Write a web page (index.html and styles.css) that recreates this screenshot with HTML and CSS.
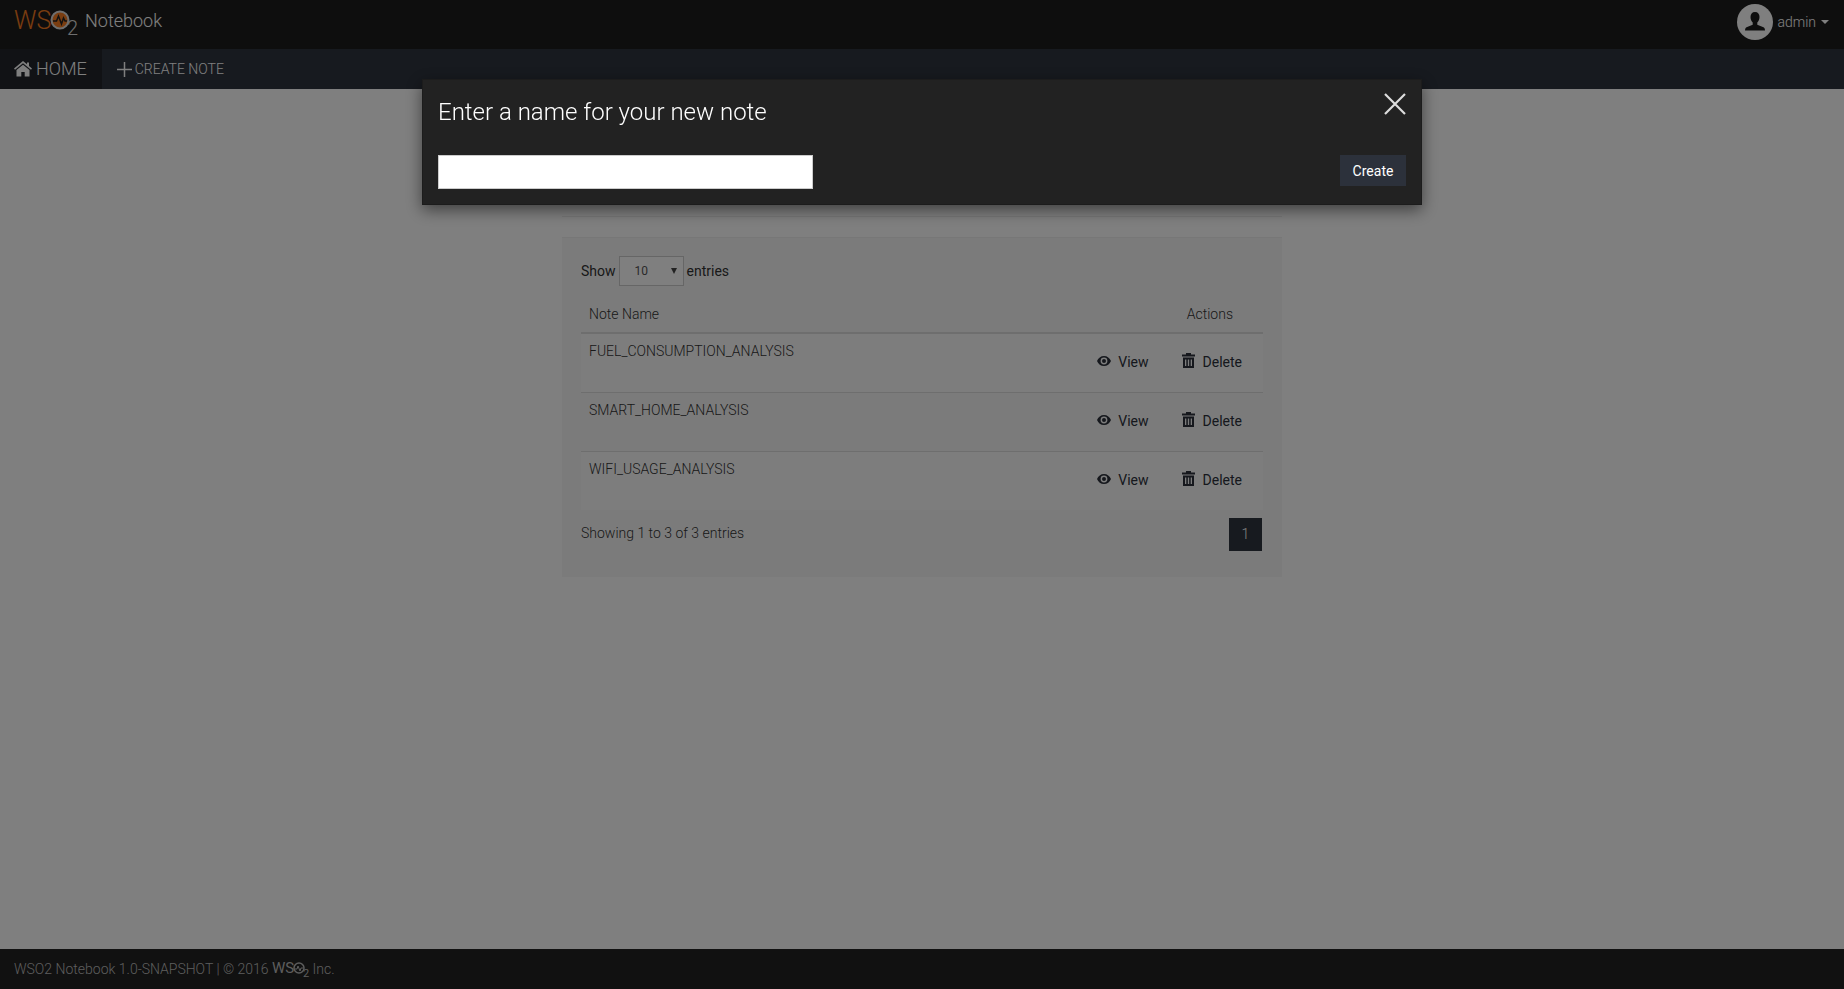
FILE: index.html
```html
<!DOCTYPE html>
<html lang="en">
<head>
<meta charset="utf-8">
<title>WSO2 Notebook</title>
<link rel="stylesheet" href="styles.css">
</head>
<body>
<svg class="sprite" aria-hidden="true">
  <symbol id="eye" viewBox="0 0 14 12"><path fill-rule="evenodd" d="M7 0C3.800 0 1.200 2 0 5c1.200 3 3.800 5 7 5s5.800-2 7-5C12.800 2 10.200 0 7 0zM7 1.600a3.400 3.400 0 1 1 0 6.800 3.400 3.400 0 0 1 0-6.800zM7 3a2 2 0 1 0 0 4 2 2 0 0 0 0-4z"/></symbol>
  <symbol id="trash" viewBox="0 0 14 18"><path fill-rule="evenodd" d="M4 0h5v1.500h4v2H0v-2h4zM1 4.500h11V15H1zM3 6.500V13h1.300V6.500zM5.850 6.500V13h1.300V6.500zM8.700 6.500V13H10V6.500z"/></symbol>
</svg>

<header class="header">
  <a class="brand" href="#">
    <svg class="brand-logo" viewBox="0 -4 66 36" role="img" aria-label="WSO2">
      <text class="logo-ws" x="0" y="20">WS</text>
      <circle cx="46" cy="11" r="8.500" fill="#f47b20" stroke="#ddd" stroke-width="2"/>
      <path d="M39 12h3.500l2-5 3 8 2-6 1.500 3h2" fill="none" stroke="#222" stroke-width="1.500"/>
      <text class="logo-two" x="53" y="26">2</text>
    </svg>
    <span class="brand-name">Notebook</span>
  </a>
  <button class="user" type="button">
    <svg class="avatar" viewBox="0 0 36 36" aria-hidden="true">
      <circle cx="18" cy="18" r="18" fill="#fff"/>
      <path d="M18 8c-3 0-4.500 2-4.500 5 0 2.500 1 4.500 2.200 5.600v2.200L9.500 23.200C8.500 23.800 8 25 8 26.500h20c0-1.500-.5-2.700-1.500-3.300l-6.200-2.400v-2.200c1.200-1.100 2.200-3.100 2.200-5.600 0-3-1.500-5-4.500-5z" fill="#1d1d1d"/>
    </svg>
    <span>admin</span>
    <span class="caret"></span>
  </button>
</header>

<nav class="nav">
  <a class="nav-home" href="#">
    <svg class="home-icon" viewBox="0 0 18 16" aria-hidden="true"><path d="M9 0L0 7.500l1 1.200 8-6.500 8 6.500 1-1.200-3-2.500V1.500h-2v1.800zM9 3.800L2.500 9v6.500h4.800v-4.500h3.400v4.500h4.800V9z"/></svg>
    <span>HOME</span>
  </a>
  <a class="nav-create" href="#">
    <svg class="plus-icon" viewBox="0 0 15 15" aria-hidden="true"><path d="M7.500 0v15M0 7.500h15" fill="none" stroke="currentColor" stroke-width="1.500"/></svg>
    <span>CREATE NOTE</span>
  </a>
</nav>

<main class="main">
  <section class="panel">
    <div class="length">
      <label for="length">Show</label>
      <span class="select-box"><select id="length"><option>10</option><option>25</option></select></span>
      <span>entries</span>
    </div>
    <table class="notes">
      <thead><tr><th>Note Name</th><th class="actions-head">Actions</th></tr></thead>
      <tbody>
        <tr><td>FUEL_CONSUMPTION_ANALYSIS</td><td><div class="actions"><a href="#"><svg class="eye" aria-hidden="true"><use href="#eye"/></svg>View</a><a href="#"><svg class="trash" aria-hidden="true"><use href="#trash"/></svg>Delete</a></div></td></tr>
        <tr><td>SMART_HOME_ANALYSIS</td><td><div class="actions"><a href="#"><svg class="eye" aria-hidden="true"><use href="#eye"/></svg>View</a><a href="#"><svg class="trash" aria-hidden="true"><use href="#trash"/></svg>Delete</a></div></td></tr>
        <tr><td>WIFI_USAGE_ANALYSIS</td><td><div class="actions"><a href="#"><svg class="eye" aria-hidden="true"><use href="#eye"/></svg>View</a><a href="#"><svg class="trash" aria-hidden="true"><use href="#trash"/></svg>Delete</a></div></td></tr>
      </tbody>
    </table>
    <div class="table-foot">
      <span>Showing 1 to 3 of 3 entries</span>
      <a class="page" href="#">1</a>
    </div>
  </section>
</main>

<footer class="footer">
  <span>WSO2 Notebook 1.0-SNAPSHOT | © 2016</span>
  <svg class="foot-logo" viewBox="0 -2 38 22" role="img" aria-label="WSO2">
    <text class="foot-ws" x="0" y="13">WS</text>
    <circle cx="27" cy="8" r="5" fill="none" stroke="#bbb" stroke-width="1.500"/>
    <path d="M23 9h2l1-3 2 5 1-3h2" fill="none" stroke="#bbb"/>
    <text class="foot-two" x="31" y="17">2</text>
  </svg>
  <span>Inc.</span>
</footer>

<div class="backdrop">
  <div class="modal" role="dialog" aria-modal="true" aria-labelledby="modal-title">
    <div class="modal-head">
      <h1 class="modal-title" id="modal-title"><label for="note-name">Enter a name for your new note</label></h1>
      <button class="close" type="button" aria-label="Close">
        <svg viewBox="0 0 22 22" aria-hidden="true"><path d="M1 1l20 20M21 1L1 21" fill="none" stroke="currentColor" stroke-width="2.200"/></svg>
      </button>
    </div>
    <form class="modal-body">
      <input class="note-name" id="note-name" type="text">
      <button class="create" type="button">Create</button>
    </form>
  </div>
</div>
</body>
</html>
```
FILE: styles.css
```css
* { box-sizing: border-box; }

body {
  margin: 0;
  min-height: 100vh;
  display: flex;
  flex-direction: column;
  background: #fff;
  color: #333;
  font: 300 14px/20px Roboto, sans-serif;
}

a { color: inherit; text-decoration: none; }
button { border: 0; padding: 0; background: none; font: inherit; cursor: pointer; }
svg { display: block; fill: currentColor; }
.sprite { position: absolute; width: 0; height: 0; }

.header {
  display: flex;
  justify-content: space-between;
  align-items: flex-start;
  height: 49px;
  padding: 4px 15px 0 14px;
  background: #1d1d1d;
  color: #fff;
}
.brand { display: flex; gap: 5px; padding-top: 1px; }
.brand-logo { width: 66px; height: 36px; }
.brand-name { padding-top: 4px; font-size: 18px; line-height: 24px; }
.logo-ws { font: 300 25px Roboto, sans-serif; fill: #f47b20; }
.logo-two { font: 300 20px Roboto, sans-serif; fill: #ddd; }
.user { display: flex; align-items: center; gap: 4px; color: #fff; }
.avatar { width: 36px; height: 36px; }
.caret {
  margin-left: 1px;
  border: 4px solid transparent;
  border-top-color: #fff;
  border-bottom: 0;
}

.nav { display: flex; height: 40px; background: #2e343e; color: #fff; }
.nav a { display: flex; align-items: center; }
.nav-home { gap: 4px; padding: 0 15px 0 14px; background: #22252b; font-size: 18px; }
.home-icon { width: 18px; height: 16px; }
.nav-create { gap: 3px; padding: 0 15px; }
.plus-icon { width: 15px; height: 15px; }

.main { flex: 1; width: 720px; max-width: 100%; margin: 127px auto 0; border-top: 1px solid #eee; padding-top: 20px; }
.panel { padding: 18px 19px; border-top: 1px solid #eee; background: #f7f7f7; }
.length { display: flex; align-items: center; gap: 3px; font-weight: 400; color: #333; }
.select-box { position: relative; color: #555; }
.select-box::after {
  content: "";
  position: absolute;
  right: 7px;
  top: 12px;
  border: 3px solid transparent;
  border-top: 6px solid #444;
  border-bottom: 0;
  pointer-events: none;
}
.select-box select {
  display: block;
  width: 65px;
  height: 30px;
  padding: 0 15px;
  appearance: none;
  border: 1px solid #ccc;
  border-radius: 0;
  background: #fff;
  color: inherit;
  font: 400 12px Roboto, sans-serif;
}

.notes { width: 100%; margin-top: 8px; border-collapse: collapse; }
.notes th { padding: 10px 8px 8px; border-bottom: 2px solid #ddd; text-align: left; font-weight: 300; }
.notes .actions-head { padding-right: 30px; text-align: right; }
.notes td { height: 59px; padding: 7px 8px; border-top: 1px solid #ddd; vertical-align: top; }
.notes tbody tr:nth-child(odd) { background: #fbfbfb; }
.actions { display: flex; justify-content: flex-end; gap: 33px; padding: 11px 13px 0 0; font-weight: 400; color: #2c313b; }
.actions a { display: flex; align-items: center; gap: 7px; }
.eye { width: 14px; height: 12px; }
.trash { width: 14px; height: 18px; }

.table-foot { display: flex; justify-content: space-between; padding: 8px 1px 8px 0; }
.table-foot span { padding-top: 5px; }
.page { width: 33px; height: 33px; background: #2e343e; color: #fff; line-height: 32px; text-align: center; }

.footer { display: flex; align-items: center; gap: 3px; height: 40px; padding: 0 14px; background: #222; color: #bbb; }
.foot-logo { width: 38px; height: 22px; }
.foot-ws { font: 400 15px Roboto, sans-serif; fill: #bbb; }
.foot-two { font: 400 11px Roboto, sans-serif; fill: #bbb; }

.backdrop { position: fixed; inset: 0; padding: 79px 20px 0; background: rgba(0, 0, 0, .5); }
.modal {
  max-width: 1000px;
  margin: 0 auto;
  padding: 13px 15px 15px;
  border: 1px solid #1c1c1c;
  background: #222;
  color: #fff;
  box-shadow: 0 5px 15px rgba(0, 0, 0, .5);
}
.modal-head { display: flex; justify-content: space-between; align-items: flex-start; }
.modal-title { margin: 0; font-size: 24px; line-height: 38px; font-weight: 300; }
.close { width: 22px; height: 22px; color: #ddd; }
.modal-body { display: flex; justify-content: space-between; align-items: flex-start; margin-top: 24px; }
.note-name {
  width: 375px;
  height: 34px;
  padding: 6px 12px;
  border: 1px solid #ccc;
  background: #fff;
  font: 400 14px Roboto, sans-serif;
}
.create { width: 66px; height: 31px; background: #2c313b; color: #fff; font-weight: 400; }
```
